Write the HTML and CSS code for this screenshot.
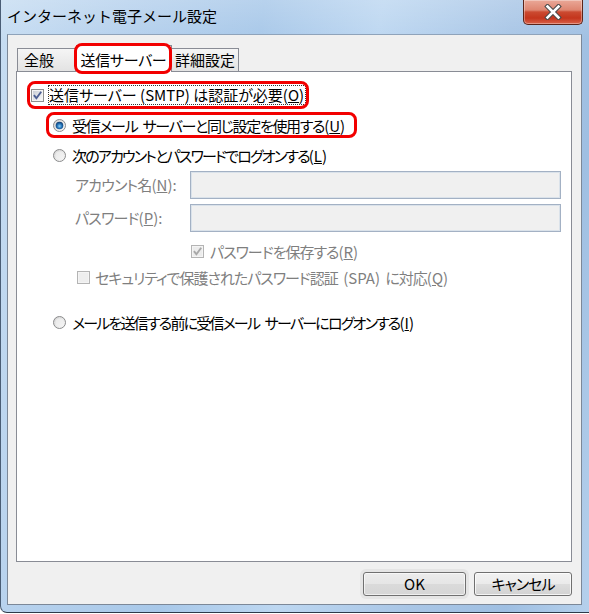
FILE: index.html
```html
<!DOCTYPE html>
<html lang="ja">
<head>
<meta charset="utf-8">
<title>インターネット電子メール設定</title>
<link rel="stylesheet" href="styles.css">
</head>
<body>
<div class="window">
  <div class="titlebar">
    <span class="title">インターネット電子メール設定</span>
    <div class="close" aria-label="閉じる">
      <svg width="18" height="16" viewBox="0 0 18 16">
        <path d="M3.5 2.5 L14.5 13.5 M14.5 2.5 L3.5 13.5" stroke="#4a4a4a" stroke-width="4.6" stroke-linecap="square" fill="none"/>
        <path d="M3.5 2.5 L14.5 13.5 M14.5 2.5 L3.5 13.5" stroke="#ffffff" stroke-width="2.6" stroke-linecap="square" fill="none"/>
      </svg>
    </div>
  </div>
  <div class="client">
    <div class="tabs">
      <div class="tab first">全般</div>
      <div class="tab selected hl">送信サーバー</div>
      <div class="tab third">詳細設定</div>
    </div>
    <div class="panel">
      <div class="row r1">
        <span class="ctl hl">
          <svg class="ico" width="13" height="13" viewBox="0 0 13 13">
            <defs><linearGradient id="cb1" x1="0" y1="0" x2="1" y2="1"><stop offset="0" stop-color="#c9ced6"/><stop offset="1" stop-color="#f8f8f8"/></linearGradient></defs>
            <rect x="0.5" y="0.5" width="12" height="12" fill="#f4f4f4" stroke="#8e8f8f"/>
            <rect x="2" y="2" width="9" height="9" fill="url(#cb1)"/>
            <path d="M2.9 6.2 L5.4 9.2 L10.2 2.8" fill="none" stroke="#4b5e93" stroke-width="1.9"/>
          </svg>
          <span class="focus">送信サーバー (SMTP) は認証が必要(<u>O</u>)</span>
        </span>
      </div>
      <div class="row">
        <span class="ctl hl r2 tight">
          <svg class="ico" width="13" height="13" viewBox="0 0 13 13">
            <defs>
              <linearGradient id="rb1" x1="0" y1="0" x2="1" y2="1"><stop offset="0" stop-color="#d2d2d2"/><stop offset="1" stop-color="#fcfcfc"/></linearGradient>
              <radialGradient id="rd1" cx="0.5" cy="0.58" r="0.6"><stop offset="0" stop-color="#8fd3f7"/><stop offset="0.5" stop-color="#2473b9"/><stop offset="1" stop-color="#0d315f"/></radialGradient>
            </defs>
            <circle cx="6.5" cy="6.5" r="6" fill="url(#rb1)" stroke="#8a8b8c"/>
            <circle cx="6.5" cy="6.5" r="3.8" fill="url(#rd1)"/>
          </svg>
          <span class="txt">受信メール サーバーと同じ設定を使用する<span class="mn">(<u>U</u>)</span></span>
        </span>
      </div>
      <div class="row">
        <span class="ctl r2 tighter">
          <svg class="ico" width="13" height="13" viewBox="0 0 13 13">
            <defs><linearGradient id="rb2" x1="0" y1="0" x2="1" y2="1"><stop offset="0" stop-color="#d2d2d2"/><stop offset="1" stop-color="#fcfcfc"/></linearGradient></defs>
            <circle cx="6.5" cy="6.5" r="6" fill="url(#rb2)" stroke="#8a8b8c"/>
            <circle cx="6.5" cy="6.5" r="4" fill="#f3f3f3" opacity="0.6"/>
          </svg>
          <span class="txt">次のアカウントとパスワードでログオンする<span class="mn">(<u>L</u>)</span></span>
        </span>
      </div>
      <div class="field">
        <span class="lbl">アカウント名<span class="mn">(<u>N</u>):</span></span>
        <span class="input"></span>
      </div>
      <div class="field">
        <span class="lbl">パスワード<span class="mn">(<u>P</u>):</span></span>
        <span class="input"></span>
      </div>
      <div class="row save">
        <span class="ctl dis">
          <svg class="ico" width="13" height="13" viewBox="0 0 13 13">
            <rect x="0.5" y="0.5" width="12" height="12" fill="#f4f4f4" stroke="#b4b4b4"/>
            <rect x="2" y="2" width="9" height="9" fill="#ececec"/>
            <path d="M2.9 6.2 L5.4 9.2 L10.2 2.8" fill="none" stroke="#a8a8a8" stroke-width="1.9"/>
          </svg>
          <span class="txt">パスワードを保存する<span class="mn">(<u>R</u>)</span></span>
        </span>
      </div>
      <div class="row spa">
        <span class="ctl dis">
          <svg class="ico" width="13" height="13" viewBox="0 0 13 13">
            <rect x="0.5" y="0.5" width="12" height="12" fill="#f4f4f4" stroke="#b4b4b4"/>
            <rect x="2" y="2" width="9" height="9" fill="#eeeeee"/>
          </svg>
          <span class="txt">セキュリティで保護されたパスワード認証 <span class="mn">(SPA)</span> に対応<span class="mn">(<u>Q</u>)</span></span>
        </span>
      </div>
      <div class="row r4">
        <span class="ctl r2 tighter">
          <svg class="ico" width="13" height="13" viewBox="0 0 13 13">
            <defs><linearGradient id="rb3" x1="0" y1="0" x2="1" y2="1"><stop offset="0" stop-color="#d2d2d2"/><stop offset="1" stop-color="#fcfcfc"/></linearGradient></defs>
            <circle cx="6.5" cy="6.5" r="6" fill="url(#rb3)" stroke="#8a8b8c"/>
            <circle cx="6.5" cy="6.5" r="4" fill="#f3f3f3" opacity="0.6"/>
          </svg>
          <span class="txt">メールを送信する前に受信メール サーバーにログオンする<span class="mn">(<u>I</u>)</span></span>
        </span>
      </div>
    </div>
    <div class="buttons">
      <div class="btn ok">OK</div>
      <div class="btn cancel">キャンセル</div>
    </div>
  </div>
</div>
</body>
</html>
```
FILE: styles.css
```css
html, body {
  margin: 0;
  padding: 0;
}
body {
  width: 589px;
  height: 614px;
  overflow: hidden;
  background: #ffffff;
  font-family: "Noto Sans CJK JP", "Noto Sans", sans-serif;
  font-size: 15px;
  color: #000;
}
.window {
  position: relative;
  box-sizing: border-box;
  width: 589px;
  height: 613px;
  padding: 0 7px 7px 6px;
  border-left: 1px solid #4a5d75;
  border-bottom: 1px solid #2e3a4a;
  border-bottom-left-radius: 7px;
  display: flex;
  flex-direction: column;
  background:
    linear-gradient(180deg, rgba(255,255,255,0.18), rgba(255,255,255,0) 40px),
    linear-gradient(100deg, #c7ddf2 0%, #b6d1ed 18%, #a8c8e9 38%, #bdd7f1 55%, #a9c6e6 74%, #9fbfe2 88%, #b5d0ec 100%);
}
.titlebar {
  height: 34px;
  flex: none;
  display: flex;
  align-items: center;
  box-sizing: border-box;
  padding-bottom: 3px;
}
.title {
  font-size: 15px;
  color: #000;
}
.close {
  position: absolute;
  top: 0;
  right: 6px;
  width: 60px;
  height: 25px;
  box-sizing: border-box;
  border: 1px solid #5b2419;
  border-top: none;
  border-radius: 0 0 5px 5px;
  background: linear-gradient(180deg, #eaa898 0%, #de8570 42%, #cb4a31 50%, #c4351d 75%, #d9624a 100%);
  box-shadow: inset 0 0 0 1px rgba(255,255,255,0.35);
  display: flex;
  align-items: center;
  justify-content: center;
}
.close svg {
  display: block;
}
.client {
  flex: 1;
  box-sizing: border-box;
  border: 1px solid #7c8898;
  border-top-color: #8fa3ba;
  background: #f0f0f0;
  padding: 10px 9px 8px 8px;
  display: flex;
  flex-direction: column;
}
.tabs {
  height: 26px;
  flex: none;
  display: flex;
  align-items: flex-end;
  padding-left: 1px;
}
.tab {
  box-sizing: border-box;
  height: 23px;
  border: 1px solid #898c95;
  border-bottom: none;
  background: linear-gradient(180deg, #f5f5f5 0%, #ececec 50%, #e3e3e3 100%);
  line-height: 21px;
  font-feature-settings: "palt";
  white-space: nowrap;
}
.tab.first {
  width: 59px;
  padding-left: 6px;
}
.tab.selected {
  position: relative;
  z-index: 1;
  width: 96px;
  height: 27px;
  margin-bottom: -1px;
  background: #ffffff;
  text-align: center;
  padding-top: 3px;
  border-left: none;
  letter-spacing: -0.3px;
}
.tab.third {
  width: 67px;
  text-align: center;
  border-left: none;
}
.hl {
  position: relative;
}
.hl::after {
  content: "";
  position: absolute;
  left: -3px;
  right: -3px;
  top: -3px;
  bottom: -3px;
  border: 3px solid #f20000;
  border-radius: 8px;
  pointer-events: none;
}
.tab.selected.hl::after {
  left: -2px;
  right: -1px;
  top: -3px;
  bottom: -2px;
}
.panel {
  box-sizing: border-box;
  height: 491px;
  flex: none;
  border: 1px solid #898c95;
  background: #ffffff;
  padding-top: 8px;
  display: flex;
  flex-direction: column;
  font-feature-settings: "palt";
}
.row {
  height: 30px;
  flex: none;
  display: flex;
  align-items: center;
}
.ctl {
  display: inline-flex;
  align-items: center;
  white-space: nowrap;
}
.ico {
  display: block;
  flex: none;
}
.r1 .ctl {
  margin-left: 13px;
  height: 22px;
  padding-left: 1px;
  gap: 4px;
}
.focus {
  border: 1px dotted #333;
  padding: 0 1px 0 0;
  line-height: 18px;
}
.r2 {
  margin-left: 32px;
  padding-left: 4px;
  gap: 6px;
  height: 20px;
}
.ctl.hl.r2 {
  padding-right: 9px;
}
.tight .txt {
  letter-spacing: -1.3px;
  word-spacing: 3px;
}
.tighter .txt {
  letter-spacing: -1.8px;
  word-spacing: 4px;
}
.mn {
  letter-spacing: 0;
  word-spacing: 0;
}
.field {
  height: 33px;
  flex: none;
  display: flex;
  align-items: flex-start;
}
.lbl {
  margin-left: 58px;
  width: 115px;
  flex: none;
  margin-top: 1px;
  line-height: 28px;
  color: #7f7f7f;
  white-space: nowrap;
  letter-spacing: -0.8px;
}
.input {
  flex: 1;
  margin-top: 1px;
  margin-right: 10px;
  height: 28px;
  box-sizing: border-box;
  background: #f0f0f0;
  border: 1px solid #a3b1c4;
  box-shadow: inset 0 0 0 1px #dae2ea;
}
.dis {
  color: #7f7f7f;
  gap: 6px;
}
.save .ctl {
  margin-left: 174px;
}
.save .txt {
  letter-spacing: -1px;
}
.spa {
  height: 22px;
}
.spa .ctl {
  margin-left: 60px;
  gap: 5px;
}
.spa .txt {
  letter-spacing: -1px;
  word-spacing: 3px;
}
.r4 {
  margin-top: 19px;
}
.buttons {
  flex: none;
  margin-top: 10px;
  display: flex;
  justify-content: flex-end;
  gap: 8px;
}
.btn {
  box-sizing: border-box;
  height: 24px;
  border: 1px solid #707070;
  border-radius: 3px;
  background: linear-gradient(180deg, #f2f2f2 0%, #ebebeb 48%, #dddddd 52%, #d2d2d2 100%);
  box-shadow: inset 0 0 0 1px rgba(255,255,255,0.75);
  text-align: center;
  line-height: 22px;
  font-size: 15px;
  font-feature-settings: "palt";
}
.btn.ok {
  width: 103px;
  background: linear-gradient(180deg, #ececec 0%, #e6e6e6 48%, #dadada 52%, #d6d6d6 100%);
  box-shadow: 0 0 0 3px #e5e5e5, inset 0 0 0 1px rgba(255,255,255,0.6);
}
.btn.cancel {
  width: 98px;
  letter-spacing: -1px;
}
```
